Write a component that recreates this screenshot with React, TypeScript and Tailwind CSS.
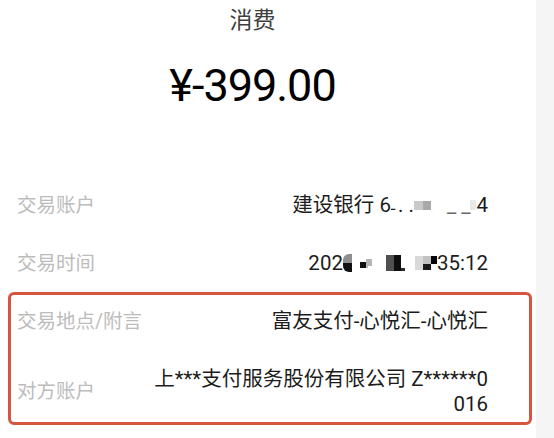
import React from "react";

const font = { fontFamily: "Roboto, 'Noto Sans CJK SC', sans-serif" };

function Row({ label, children }: { label: string; children: React.ReactNode }) {
  return (
    <div className="flex items-center justify-between py-[16.5px]">
      <span className="shrink-0 text-[19.5px] leading-[25px] text-[#bcbcbc]">{label}</span>
      <div className="max-w-[350px] text-right text-[20.5px] leading-[25px] text-[#1c1c1c]">{children}</div>
    </div>
  );
}

// pixelated mask blocks over private digits
function Blk({ c, w = 8, h = 9, y = 0 }: { c: string; w?: number; h?: number; y?: number }) {
  return <span className="inline-block align-middle" style={{ width: w, height: h, background: c, marginTop: y }} />;
}

export default function App() {
  return (
    <div className="flex h-[438px] w-full overflow-hidden bg-white" style={font}>
      <main className="w-[536px] shrink-0 bg-white pl-[17px] pr-[48px]">
        <h1 className="pt-[6px] text-center text-[23px] leading-[30px] text-[#3f3f3f]">消费</h1>
        <p className="mt-[22px] text-center text-[45px] leading-[56px] tracking-[-1px] text-black">¥-399.00</p>

        <div className="mt-[62px]">
          <Row label="交易账户">
            <span className="inline-flex items-center">
              建设银行 6<span className="text-[14px]">ـ</span>
              <span className="ml-[3px]">. .</span>
              <Blk c="#c9c9c9" w={9} h={9} />
              <Blk c="#a9a9a9" w={8} h={9} />
              <span className="ml-[16px] text-[#666]">_ _</span>
              <Blk c="#e8e8e8" w={6} h={10} />
              4
            </span>
          </Row>
          <Row label="交易时间">
            <span className="inline-flex items-center">
              202
              <span className="relative inline-block h-[18px] w-[9px]">
                <span className="absolute left-0 top-0 h-[9px] w-[9px] rounded-tl-[6px] bg-[#8e8e8e]" />
                <span className="absolute bottom-0 left-0 h-[9px] w-[9px] rounded-bl-[6px] bg-[#111]" />
              </span>
              <span className="ml-[8px] inline-flex items-end">
                <Blk c="#111" w={6} h={6} />
                <span className="flex flex-col">
                  <Blk c="#b5b5b5" w={6} h={7} />
                  <span className="h-[2px] w-[2px] bg-[#bbb]" />
                </span>
              </span>
              <span className="ml-[14px] inline-flex items-end">
                <Blk c="#505050" w={8} h={16} />
                <Blk c="#0e0e0e" w={7} h={16} />
                <Blk c="#2a2a2a" w={4} h={3} />
              </span>
              <span className="ml-[10px] inline-flex items-end">
                <Blk c="#d9d9d9" w={8} h={14} />
                <span className="flex flex-col">
                  <Blk c="#c2c2c2" w={8} h={8} />
                  <Blk c="#1a1a1a" w={8} h={6} />
                </span>
                <span className="flex flex-col self-start">
                  <Blk c="#060606" w={6} h={8} />
                </span>
              </span>
              35:12
            </span>
          </Row>

          <div className="relative">
            <div className="pointer-events-none absolute -left-[9px] -right-[44px] top-0 bottom-[8px] rounded-[6px] border-[3px] border-[#d6553f]" />
            <Row label="交易地点/附言">富友支付-心悦汇-心悦汇</Row>
            <Row label="对方账户">
              上***支付服务股份有限公司 Z******0
              <br />
              016
            </Row>
          </div>
        </div>
      </main>
      <aside className="flex-1 bg-[#f5f5f5]" />
    </div>
  );
}
